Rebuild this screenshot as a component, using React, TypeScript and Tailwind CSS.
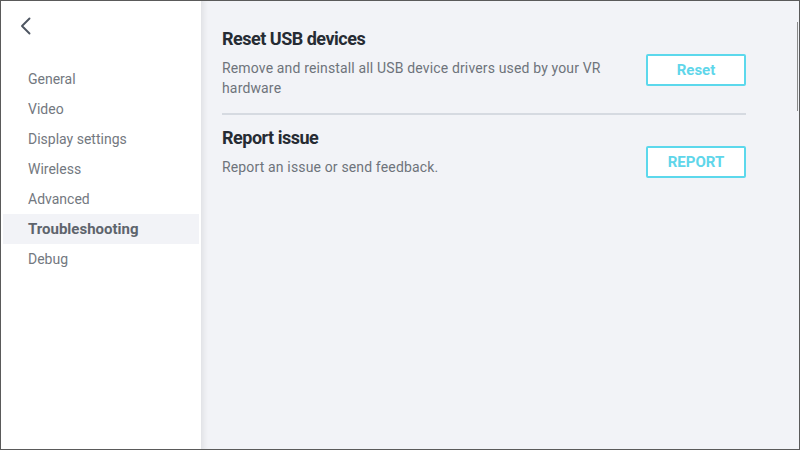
const navItems = [
  "General",
  "Video",
  "Display settings",
  "Wireless",
  "Advanced",
  "Troubleshooting",
  "Debug",
];

type SettingRowProps = {
  title: string;
  description: string;
  action: string;
  buttonOffset: string;
};

function SettingRow({ title, description, action, buttonOffset }: SettingRowProps) {
  return (
    <div className="flex items-start justify-between">
      <div className="flex flex-col">
        <h2 className="text-[18px] leading-[20px] font-bold tracking-[-0.5px] text-[#262b33]">
          {title}
        </h2>
        <p className="mt-[9px] w-[390px] text-[14px] leading-[20px] tracking-[0.15px] text-[#6e737b]">
          {description}
        </p>
      </div>
      <button
        className={`${buttonOffset} w-[100px] h-[32px] rounded-[2px] border-2 border-[#5cd8ec] bg-white text-[15px] font-bold text-[#5fd6ea]`}
      >
        {action}
      </button>
    </div>
  );
}

export default function App() {
  return (
    <div
      className="relative w-[800px] h-[450px] flex border border-[#5a5a5a] bg-white overflow-hidden"
      style={{ fontFamily: "Roboto, 'Noto Sans', sans-serif" }}
    >
      {/* sidebar */}
      <aside className="w-[200px] flex flex-col bg-white">
        <button className="ml-[18px] mt-[16px] w-[14px] h-[18px] flex items-center justify-center text-[#4d5561]">
          <svg width="14" height="18" viewBox="0 0 14 18" fill="none">
            <path
              d="M10.5 1.5 L3 9 L10.5 16.5"
              stroke="currentColor"
              strokeWidth="1.9"
              strokeLinecap="round"
              strokeLinejoin="round"
            />
          </svg>
        </button>
        <nav className="mt-[29px] px-[2px] flex flex-col">
          {navItems.map((item) => {
            const active = item === "Troubleshooting";
            return (
              <div
                key={item}
                className={
                  active
                    ? "h-[30px] pl-[25px] flex items-center bg-[#f2f3f7] text-[15px] font-bold text-[#5e646c]"
                    : "h-[30px] pl-[25px] flex items-center text-[14px] text-[#737880]"
                }
              >
                {item}
              </div>
            );
          })}
        </nav>
      </aside>

      {/* content */}
      <main className="flex-1 bg-[#f2f3f7] shadow-[inset_7px_0_6px_-5px_rgba(0,0,0,0.09)]">
        <div className="w-[524px] ml-[21px] pt-[28px] flex flex-col">
          <SettingRow
            title="Reset USB devices"
            description="Remove and reinstall all USB device drivers used by your VR hardware"
            action="Reset"
            buttonOffset="mt-[25px]"
          />
          <div className="mt-[15px] h-[2px] bg-[#d6dae1]" />
          <div className="mt-[13px]">
            <SettingRow
              title="Report issue"
              description="Report an issue or send feedback."
              action="REPORT"
              buttonOffset="mt-[18px]"
            />
          </div>
        </div>
      </main>

      {/* window edge handle */}
      <div className="absolute right-[1px] top-[21px] w-[1px] h-[89px] bg-[#8a8a8a]" />
    </div>
  );
}
